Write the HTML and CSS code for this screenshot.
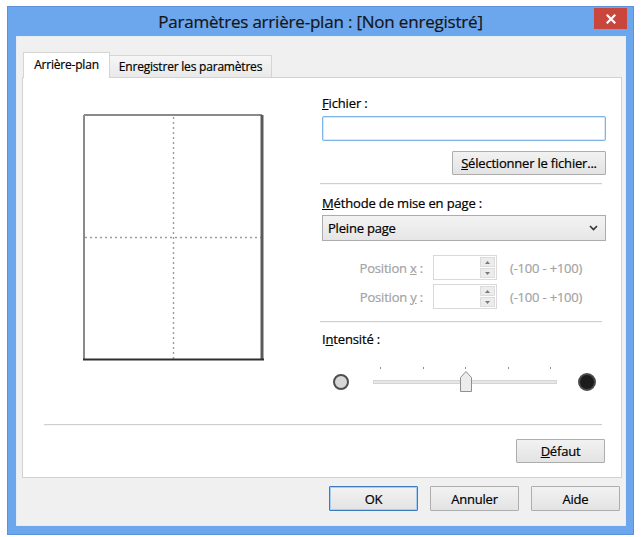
FILE: index.html
```html
<!DOCTYPE html>
<html lang="fr">
<head>
<meta charset="utf-8">
<title>Paramètres arrière-plan</title>
<link rel="stylesheet" href="styles.css">
</head>
<body>
<div class="window">
  <div class="titlebar">
    <span class="title">Paramètres arrière-plan : [Non enregistré]</span>
    <button class="close" aria-label="Fermer">
      <svg width="10" height="10" viewBox="0 0 10 10"><path d="M1.5 1.5 L8.5 8.5 M8.5 1.5 L1.5 8.5" stroke="#fff" stroke-width="2.2" stroke-linecap="square"/></svg>
    </button>
  </div>
  <div class="client">
    <div class="tabs">
      <div class="tab tab-active">Arrière-plan</div>
      <div class="tab tab-second">Enregistrer les paramètres</div>
    </div>
    <div class="panel">
      <div class="panel-top">
        <div class="preview-col">
          <svg class="preview" width="181" height="247" viewBox="0 0 181 247">
            <rect x="1" y="1" width="178" height="244" fill="#fff"/>
            <line x1="90.5" y1="3" x2="90.5" y2="245" stroke="#9c9c9c" stroke-width="1.4" stroke-dasharray="2 3"/>
            <line x1="2" y1="123.5" x2="178" y2="123.5" stroke="#9c9c9c" stroke-width="1.4" stroke-dasharray="2 3"/>
            <line x1="1" y1="1" x2="179" y2="1" stroke="#8a8a8a" stroke-width="2"/>
            <line x1="1" y1="1" x2="1" y2="246" stroke="#8a8a8a" stroke-width="2"/>
            <line x1="179" y1="1" x2="179" y2="246" stroke="#5a5a5a" stroke-width="3"/>
            <line x1="0" y1="245.5" x2="181" y2="245.5" stroke="#2e2e2e" stroke-width="2"/>
          </svg>
        </div>
        <div class="form-col">
          <div class="label label-file"><u>F</u>ichier :</div>
          <div class="input"></div>
          <div class="row-right"><button class="btn btn-file"><u>S</u>électionner le fichier...</button></div>
          <div class="sep sep-form"></div>
          <div class="label label-method"><u>M</u>éthode de mise en page :</div>
          <div class="select">
            <span>Pleine page</span>
            <svg width="9" height="6" viewBox="0 0 9 6"><path d="M1 1 L4.5 4.5 L8 1" fill="none" stroke="#333" stroke-width="1.6"/></svg>
          </div>
          <div class="pos-row pos-row-x">
            <span class="pos-label">Position <u>x</u> :</span>
            <div class="spin">
              <div class="spin-btns">
                <span class="spin-up"><svg width="5" height="3" viewBox="0 0 5 3"><path d="M0 3 L2.5 0 L5 3Z" fill="#7a7a7a"/></svg></span>
                <span class="spin-down"><svg width="5" height="3" viewBox="0 0 5 3"><path d="M0 0 L2.5 3 L5 0Z" fill="#7a7a7a"/></svg></span>
              </div>
            </div>
            <span class="range">(-100 - +100)</span>
          </div>
          <div class="pos-row pos-row-y">
            <span class="pos-label">Position <u>y</u> :</span>
            <div class="spin">
              <div class="spin-btns">
                <span class="spin-up"><svg width="5" height="3" viewBox="0 0 5 3"><path d="M0 3 L2.5 0 L5 3Z" fill="#7a7a7a"/></svg></span>
                <span class="spin-down"><svg width="5" height="3" viewBox="0 0 5 3"><path d="M0 0 L2.5 3 L5 0Z" fill="#7a7a7a"/></svg></span>
              </div>
            </div>
            <span class="range">(-100 - +100)</span>
          </div>
          <div class="sep sep-form sep-form2"></div>
          <div class="label label-intensity">I<u>n</u>tensité :</div>
          <div class="slider-row">
            <span class="dot dot-light"></span>
            <div class="slider">
              <div class="ticks"><i></i><i></i><i></i><i></i><i></i></div>
              <div class="track"></div>
              <svg class="thumb" width="12" height="21" viewBox="0 0 12 21"><path d="M0.5 6.5 L6 0.5 L11.5 6.5 L11.5 20.5 L0.5 20.5 Z" fill="#ececec" stroke="#8f8f8f" stroke-width="1"/></svg>
            </div>
            <span class="dot dot-dark"></span>
          </div>
        </div>
      </div>
      <div class="sep sep-wide"></div>
      <div class="row-right row-default"><button class="btn btn-default"><u>D</u>éfaut</button></div>
    </div>
    <div class="footer">
      <button class="btn btn-ok">OK</button>
      <button class="btn btn-foot">Annuler</button>
      <button class="btn btn-foot">Aide</button>
    </div>
  </div>
</div>
</body>
</html>
```

FILE: styles.css
```css
* { box-sizing: border-box; }
html, body { margin: 0; padding: 0; background: #fff; }
body {
  font-family: "Open Sans", "Liberation Sans", Arial, sans-serif;
  font-size: 13px;
  color: #000;
  -webkit-text-stroke: 0.2px currentColor;
}
u { text-decoration: underline; text-underline-offset: 1px; }

.window {
  margin: 6px 0 0 7px;
  width: 627px;
  height: 529px;
  background: #6ca7ee;
  border: 1px solid #5a93dc;
  display: flex;
  flex-direction: column;
}
.titlebar {
  height: 29px;
  position: relative;
  display: flex;
  align-items: center;
  justify-content: center;
}
.title {
  font-size: 17px;
  letter-spacing: -0.2px;
  color: #151515;
  margin-top: 0;
}
.close {
  position: absolute;
  right: 6px;
  top: 1px;
  width: 33px;
  height: 21px;
  padding: 0;
  border: none;
  background: #c9463d;
  display: flex;
  align-items: center;
  justify-content: center;
}

.client {
  flex: 1;
  margin: 0 7px 8px 8px;
  background: #f0f0f0;
  border: 1px solid #e4ecf6;
  padding: 15px 5px 0 5px;
  display: flex;
  flex-direction: column;
}

.tabs {
  display: flex;
  align-items: flex-end;
  height: 25px;
  padding-left: 1px;
  position: relative;
  z-index: 1;
}
.tab {
  font-size: 12px;
  letter-spacing: -0.2px;
  border: 1px solid #d5d5d5;
  border-bottom: none;
  background: linear-gradient(#f6f6f6, #e9e9e9);
  display: flex;
  align-items: center;
  justify-content: center;
  white-space: nowrap;
}
.tab-active {
  width: 87px;
  height: 26px;
  margin-bottom: -1px;
  background: #fff;
  padding-bottom: 2px;
}
.tab-second {
  width: 162px;
  height: 22px;
  border-left: none;
}

.panel {
  width: 600px;
  height: 401px;
  background: #fff;
  border: 1px solid #d2d2d2;
  display: flex;
  flex-direction: column;
}
.panel-top {
  display: flex;
  height: 346px;
}
.preview-col {
  width: 299px;
  padding: 36px 0 0 60px;
}
.preview { display: block; }

.form-col {
  width: 284px;
  display: flex;
  flex-direction: column;
}
.label {
  line-height: 16px;
  height: 16px;
  letter-spacing: -0.15px;
  white-space: nowrap;
}
.label-file { margin-top: 17px; }
.input {
  margin-top: 5px;
  height: 25px;
  width: 284px;
  border: 1px solid #7fb2e6;
  border-radius: 2px;
  background: #fff;
  box-shadow: inset 0 0 0 1px #d6e8fa;
}
.row-right {
  display: flex;
  justify-content: flex-end;
}
.btn {
  font-family: inherit;
  font-size: 13px;
  letter-spacing: -0.2px;
  color: #000;
  height: 24px;
  padding: 0;
  border: 1px solid #adadad;
  border-radius: 1px;
  background: linear-gradient(#f2f2f2, #e3e3e3);
  white-space: nowrap;
}
.btn-file {
  margin-top: 10px;
  width: 154px;
}
.sep {
  height: 2px;
  border-top: 1px solid #cfcfcf;
  border-bottom: 1px solid #f6f6f6;
}
.sep-form {
  margin-top: 8px;
  margin-left: -2px;
  width: 282px;
}
.label-method { margin-top: 10px; }
.select {
  margin-top: 4px;
  height: 26px;
  width: 284px;
  border: 1px solid #acacac;
  background: linear-gradient(#f3f3f3, #e6e6e6);
  display: flex;
  align-items: center;
  justify-content: space-between;
  padding: 0 7px 0 5px;
  letter-spacing: -0.2px;
}

.pos-row {
  display: flex;
  align-items: center;
  height: 25px;
  color: #a3a3a3;
  letter-spacing: -0.2px;
  white-space: nowrap;
}
.pos-row-x { margin-top: 14px; }
.pos-row-y { margin-top: 4px; }
.pos-label {
  width: 111px;
  text-align: right;
  padding-right: 10px;
}
.spin {
  width: 64px;
  height: 25px;
  border: 1px solid #d9d9d9;
  background: #fff;
  display: flex;
  justify-content: flex-end;
  padding: 1px;
}
.spin-btns {
  width: 15px;
  display: flex;
  flex-direction: column;
  gap: 1px;
}
.spin-up, .spin-down {
  flex: 1;
  background: #ececec;
  border: 1px solid #dcdcdc;
  display: flex;
  align-items: center;
  justify-content: center;
}
.spin-up svg, .spin-down svg { display: block; }
.range { margin-left: 13px; }

.sep-form2 { margin-top: 12px; }
.label-intensity { margin-top: 8px; }

.slider-row {
  margin-top: 25px;
  height: 20px;
  display: flex;
  align-items: center;
}
.dot {
  display: block;
  border-radius: 50%;
}
.dot-light {
  width: 16px;
  height: 16px;
  margin-left: 11px;
  background: #d7d7d7;
  border: 2px solid #4e4e4e;
}
.dot-dark {
  width: 18px;
  height: 18px;
  margin-left: 21px;
  background: #1c1c1c;
  border: 2px solid #4a4a4a;
}
.slider {
  position: relative;
  width: 184px;
  height: 20px;
  margin-left: 24px;
  display: flex;
  align-items: center;
}
.track {
  width: 100%;
  height: 4px;
  background: #e7e7e7;
  border: 1px solid #d4d4d4;
}
.ticks {
  position: absolute;
  left: 0;
  right: 0;
  top: -5px;
  display: flex;
  justify-content: space-between;
  padding: 0 6px 0 7px;
}
.ticks i {
  display: block;
  width: 1px;
  height: 2px;
  background: #8a8a8a;
}
.thumb {
  position: absolute;
  left: 87px;
  top: -1px;
}

.sep-wide {
  margin-left: 21px;
  width: 558px;
}
.row-default { padding-right: 16px; }
.btn-default {
  margin-top: 13px;
  width: 89px;
}

.footer {
  display: flex;
  justify-content: flex-end;
  gap: 12px;
  margin-top: 8px;
}
.footer .btn {
  width: 89px;
  height: 25px;
}
.btn-ok {
  border-color: #3d7bbf;
  box-shadow: inset 0 0 0 1px #a9cdf0;
}
```
